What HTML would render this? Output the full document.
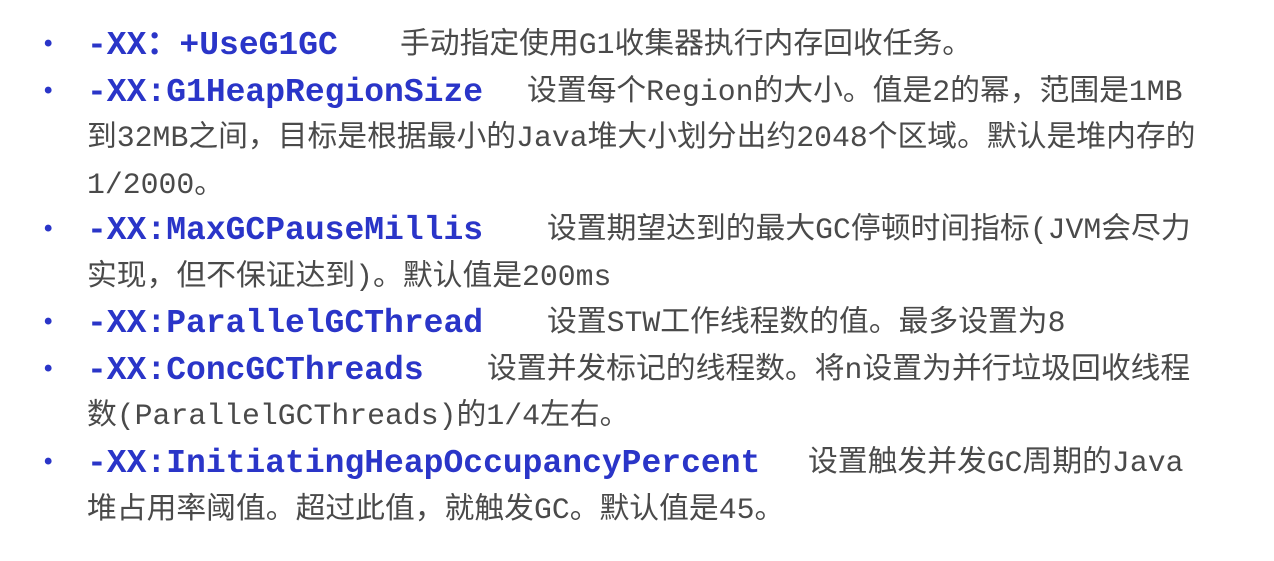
<!DOCTYPE html>
<html><head><meta charset="utf-8"><style>
body{margin:0;width:1274px;height:561px;background:#fff;position:relative;overflow:hidden;font-family:"Liberation Mono","Noto Sans CJK SC",monospace;}
.l{position:absolute;white-space:nowrap;font-size:29.8px;color:#4a4a4a;line-height:40px;}
.b{position:absolute;left:41px;font-size:24px;color:#2a35c8;font-weight:bold;}
.k{position:absolute;white-space:nowrap;font-size:33px;color:#2a35c8;font-weight:bold;line-height:40px;}
</style></head><body>
<div class="b" style="top:32px">•</div>
<div class="k" style="left:87px;top:26px">-XX：+UseG1GC</div>
<div class="l" style="left:400px;top:25px">手动指定使用G1收集器执行内存回收任务。</div>

<div class="b" style="top:79px">•</div>
<div class="k" style="left:87px;top:73px">-XX:G1HeapRegionSize</div>
<div class="l" style="left:527px;top:72px">设置每个Region的大小。值是2的幂，范围是1MB</div>
<div class="l" style="left:87px;top:118px">到32MB之间，目标是根据最小的Java堆大小划分出约2048个区域。默认是堆内存的</div>
<div class="l" style="left:87px;top:165px">1/2000。</div>

<div class="b" style="top:217px">•</div>
<div class="k" style="left:87px;top:211px">-XX:MaxGCPauseMillis</div>
<div class="l" style="left:547px;top:210px">设置期望达到的最大GC停顿时间指标(JVM会尽力</div>
<div class="l" style="left:87px;top:257px">实现，但不保证达到)。默认值是200ms</div>

<div class="b" style="top:310px">•</div>
<div class="k" style="left:87px;top:304px">-XX:ParallelGCThread</div>
<div class="l" style="left:547px;top:303px">设置STW工作线程数的值。最多设置为8</div>

<div class="b" style="top:357px">•</div>
<div class="k" style="left:87px;top:351px">-XX:ConcGCThreads</div>
<div class="l" style="left:487px;top:350px">设置并发标记的线程数。将n设置为并行垃圾回收线程</div>
<div class="l" style="left:87px;top:396px">数(ParallelGCThreads)的1/4左右。</div>

<div class="b" style="top:450px">•</div>
<div class="k" style="left:87px;top:444px">-XX:InitiatingHeapOccupancyPercent</div>
<div class="l" style="left:808px;top:443px">设置触发并发GC周期的Java</div>
<div class="l" style="left:87px;top:490px">堆占用率阈值。超过此值，就触发GC。默认值是45。</div>
</body></html>
